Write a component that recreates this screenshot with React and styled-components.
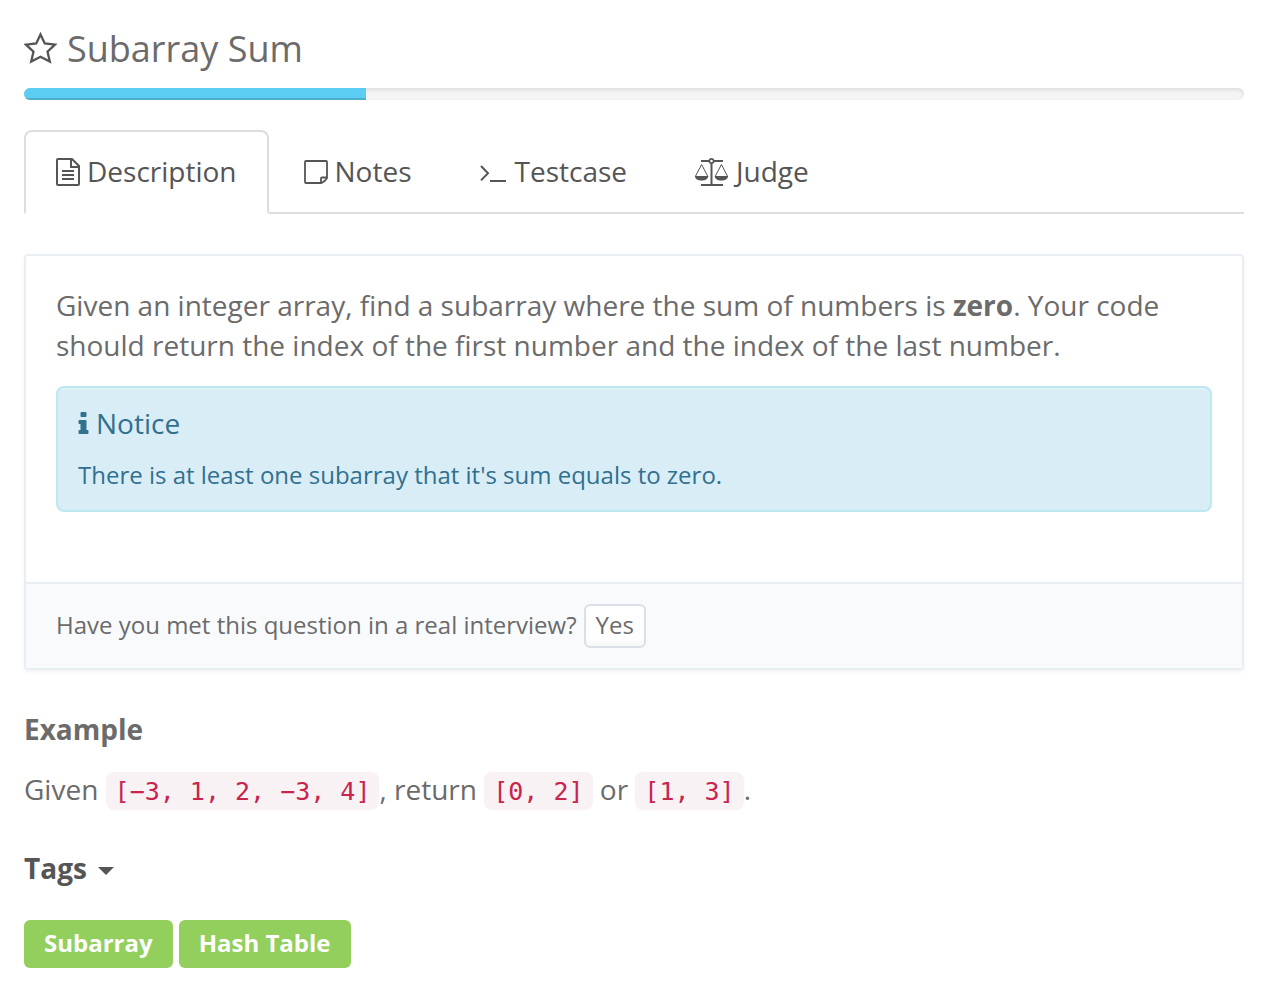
import React, { useState } from "react";
import styled, { createGlobalStyle } from "styled-components";

const GlobalStyle = createGlobalStyle`
  *, *::before, *::after { box-sizing: border-box; }
  body {
    margin: 0;
    background: #fff;
    color: #6b6b6b;
    font-family: "Open Sans", "Noto Sans", sans-serif;
    font-size: 28px;
    line-height: 40px;
  }
  button { font-family: inherit; }
`;

const Page = styled.main`
  padding: 24px;
`;

const TitleRow = styled.header`
  display: flex;
  align-items: center;
  gap: 9px;
`;

const StarButton = styled.button`
  display: flex;
  padding: 0;
  border: 0;
  background: none;
  color: #555;
  cursor: pointer;
`;

const Title = styled.h1`
  margin: 0;
  font-size: 36px;
  font-weight: 400;
  line-height: 50px;
`;

const Track = styled.div`
  height: 12px;
  margin: 14px 0 30px;
  overflow: hidden;
  border-radius: 8px;
  background: #f5f5f5;
  box-shadow: inset 0 2px 4px rgba(0, 0, 0, 0.1);
`;

const Fill = styled.div`
  width: ${(p) => p.$percent}%;
  height: 100%;
  background: #5bcdf2;
  box-shadow: inset 0 -2px 0 rgba(0, 0, 0, 0.15);
`;

const TabList = styled.div`
  display: flex;
  gap: 3px;
  border-bottom: 2px solid #ddd;
`;

const Tab = styled.button`
  display: flex;
  align-items: center;
  gap: 7px;
  margin-bottom: -2px;
  padding: 19px 30px 21px;
  border: 2px solid ${(p) => (p.$active ? "#ddd" : "transparent")};
  border-bottom-color: ${(p) => (p.$active ? "#fff" : "transparent")};
  border-radius: 8px 8px 0 0;
  background: ${(p) => (p.$active ? "#fff" : "transparent")};
  color: #555;
  font-size: 28px;
  line-height: 40px;
  cursor: pointer;

  svg {
    margin-top: 2px;
  }
`;

const Panel = styled.section`
  margin-top: 40px;
  overflow: hidden;
  border: 2px solid #e9eef4;
  border-radius: 4px;
  box-shadow: 0 2px 4px rgba(0, 0, 0, 0.05);
`;

const PanelBody = styled.div`
  padding: 29px 30px 70px;
`;

const Paragraph = styled.p`
  margin: 0 0 21px;
`;

const Notice = styled.aside`
  padding: 15px 20px;
  border: 2px solid #bce8f1;
  border-radius: 8px;
  background: #d9edf7;
  box-shadow: inset 0 2px 0 rgba(255, 255, 255, 0.2);
  color: #31708f;
`;

const NoticeTitle = styled.h2`
  display: flex;
  align-items: center;
  gap: 7px;
  margin: 0 0 12px;
  font-size: 28px;
  font-weight: 400;
  line-height: 40px;
`;

const NoticeText = styled.p`
  margin: 0;
  font-size: 24px;
  line-height: 40px;
`;

const PanelFooter = styled.footer`
  display: flex;
  align-items: baseline;
  gap: 7px;
  padding: 20px 30px;
  border-top: 2px solid #e9eef4;
  background: #f9fafc;
  font-size: 24px;
`;

const YesButton = styled.button`
  height: 44px;
  padding: 0 10px 2px;
  border: 2px solid #dcdfe8;
  border-radius: 6px;
  background: #fff;
  box-shadow: inset 0 -4px 4px rgba(0, 0, 0, 0.03);
  color: #6b6b6b;
  font-size: 24px;
  line-height: 38px;
  cursor: pointer;
`;

const SectionTitle = styled.h2`
  margin: 39px 0 20px;
  font-size: 28px;
  font-weight: 700;
  line-height: 40px;
`;

const TagsToggle = styled.button`
  display: flex;
  align-items: center;
  gap: 11px;
  padding: 0;
  border: 0;
  background: none;
  color: #555;
  font-size: inherit;
  font-weight: inherit;
  line-height: inherit;
  cursor: pointer;
`;

const Caret = styled.span`
  margin-top: 6px;
  border-top: 8px solid currentColor;
  border-right: 8px solid transparent;
  border-left: 8px solid transparent;
`;

const Code = styled.code`
  padding: 5px 9px 4px;
  border-radius: 8px;
  background: #f9f2f4;
  color: #c7254e;
  font-family: "DejaVu Sans Mono", monospace;
  font-size: 25px;
  line-height: 1;
`;

const TagRow = styled.div`
  display: flex;
  flex-wrap: wrap;
  gap: 6px;
  margin-top: 32px;
`;

const Tag = styled.a`
  padding: 3px 20px 5px;
  border-radius: 6px;
  background: #92cf5c;
  color: #fff;
  font-size: 24px;
  font-weight: 700;
  text-decoration: none;
`;

const StarIcon = () => (
  <svg width="34" height="34" viewBox="0 0 34 34" fill="none" stroke="currentColor" strokeWidth="2.3" aria-hidden="true">
    <path d="M16.5 2.4 20.8 11.5 31 12.7 23.5 19.6 25.8 29.6 16.5 24.8 7.2 29.6 9.5 19.6 2 12.7 12.2 11.5Z" />
  </svg>
);

const FileIcon = () => (
  <svg width="24" height="28" viewBox="0 0 24 28" fill="none" stroke="currentColor" strokeWidth="2" aria-hidden="true">
    <path d="M2 1H16L23 8V26Q23 27 22 27H2Q1 27 1 26V2Q1 1 2 1Z" />
    <path d="M15 1V9H23M6 13H18M6 17H18M6 21H18" />
  </svg>
);

const NoteIcon = () => (
  <svg width="24" height="24" viewBox="0 0 24 24" fill="none" stroke="currentColor" strokeWidth="1.8" aria-hidden="true">
    <path d="M2 1H22Q23 1 23 2V18Q21 21.5 17.5 23H2Q1 23 1 22V2Q1 1 2 1Z" />
    <path d="M17 23V18.5Q17 17.5 18 17.5H23" />
  </svg>
);

const PromptIcon = () => (
  <svg width="29" height="28" viewBox="0 0 29 28" fill="none" stroke="currentColor" strokeWidth="2" aria-hidden="true">
    <path d="M2 8 9 15.2 2 22.4M11 23H27" />
  </svg>
);

const ScalesIcon = () => (
  <svg width="35" height="28" viewBox="0 0 35 28" fill="none" stroke="currentColor" aria-hidden="true">
    <path d="M7 3H15M20 3H29M7 27H29" strokeWidth="2" />
    <path d="M17.5 5V27" strokeWidth="2" />
    <circle cx="17.5" cy="3" r="2.1" strokeWidth="1.6" />
    <path d="M1.6 18 7.6 6.5 13.6 18M21.4 18 27.4 6.5 33.4 18" strokeWidth="1" />
    <path d="M.8 18H14.4C14 21 11.2 22.6 7.6 22.6S1.2 21 .8 18ZM20.6 18H34.2C33.8 21 31 22.6 27.4 22.6S21 21 20.6 18Z" fill="currentColor" stroke="none" />
  </svg>
);

const InfoIcon = () => (
  <svg width="11" height="22" viewBox="0 0 10 22" fill="currentColor" aria-hidden="true">
    <path d="M3 0H7Q8 0 8 1V4Q8 5 7 5H3Q2 5 2 4V1Q2 0 3 0ZM1 8H7Q8 8 8 9V18H9Q10 18 10 19V21Q10 22 9 22H1Q0 22 0 21V19Q0 18 1 18H2V12H1Q0 12 0 11V9Q0 8 1 8Z" />
  </svg>
);

const tabs = [
  { label: "Description", Icon: FileIcon },
  { label: "Notes", Icon: NoteIcon },
  { label: "Testcase", Icon: PromptIcon },
  { label: "Judge", Icon: ScalesIcon },
];

const tags = ["Subarray", "Hash Table"];

export default function App() {
  const [active, setActive] = useState("Description");
  const [tagsOpen, setTagsOpen] = useState(true);

  return (
    <>
      <GlobalStyle />
      <Page>
        <TitleRow>
          <StarButton type="button" aria-label="Favorite">
            <StarIcon />
          </StarButton>
          <Title>Subarray Sum</Title>
        </TitleRow>
        <Track role="progressbar" aria-label="Progress" aria-valuenow={28} aria-valuemin={0} aria-valuemax={100}>
          <Fill $percent={28} />
        </Track>

        <TabList role="tablist">
          {tabs.map(({ label, Icon }) => (
            <Tab
              key={label}
              type="button"
              role="tab"
              aria-selected={active === label}
              $active={active === label}
              onClick={() => setActive(label)}
            >
              <Icon />
              {label}
            </Tab>
          ))}
        </TabList>

        <Panel>
          <PanelBody>
            <Paragraph>
              Given an integer array, find a subarray where the sum of numbers is <strong>zero</strong>. Your code
              should return the index of the first number and the index of the last number.
            </Paragraph>
            <Notice>
              <NoticeTitle>
                <InfoIcon />
                Notice
              </NoticeTitle>
              <NoticeText>There is at least one subarray that it's sum equals to zero.</NoticeText>
            </Notice>
          </PanelBody>
          <PanelFooter>
            <span>Have you met this question in a real interview?</span>
            <YesButton type="button">Yes</YesButton>
          </PanelFooter>
        </Panel>

        <SectionTitle>Example</SectionTitle>
        <Paragraph>
          Given <Code>[−3, 1, 2, −3, 4]</Code>, return <Code>[0, 2]</Code> or <Code>[1, 3]</Code>.
        </Paragraph>

        <SectionTitle>
          <TagsToggle type="button" aria-expanded={tagsOpen} onClick={() => setTagsOpen(!tagsOpen)}>
            Tags
            <Caret />
          </TagsToggle>
        </SectionTitle>
        {tagsOpen && (
          <TagRow>
            {tags.map((tag) => (
              <Tag key={tag} href="#">
                {tag}
              </Tag>
            ))}
          </TagRow>
        )}
      </Page>
    </>
  );
}
